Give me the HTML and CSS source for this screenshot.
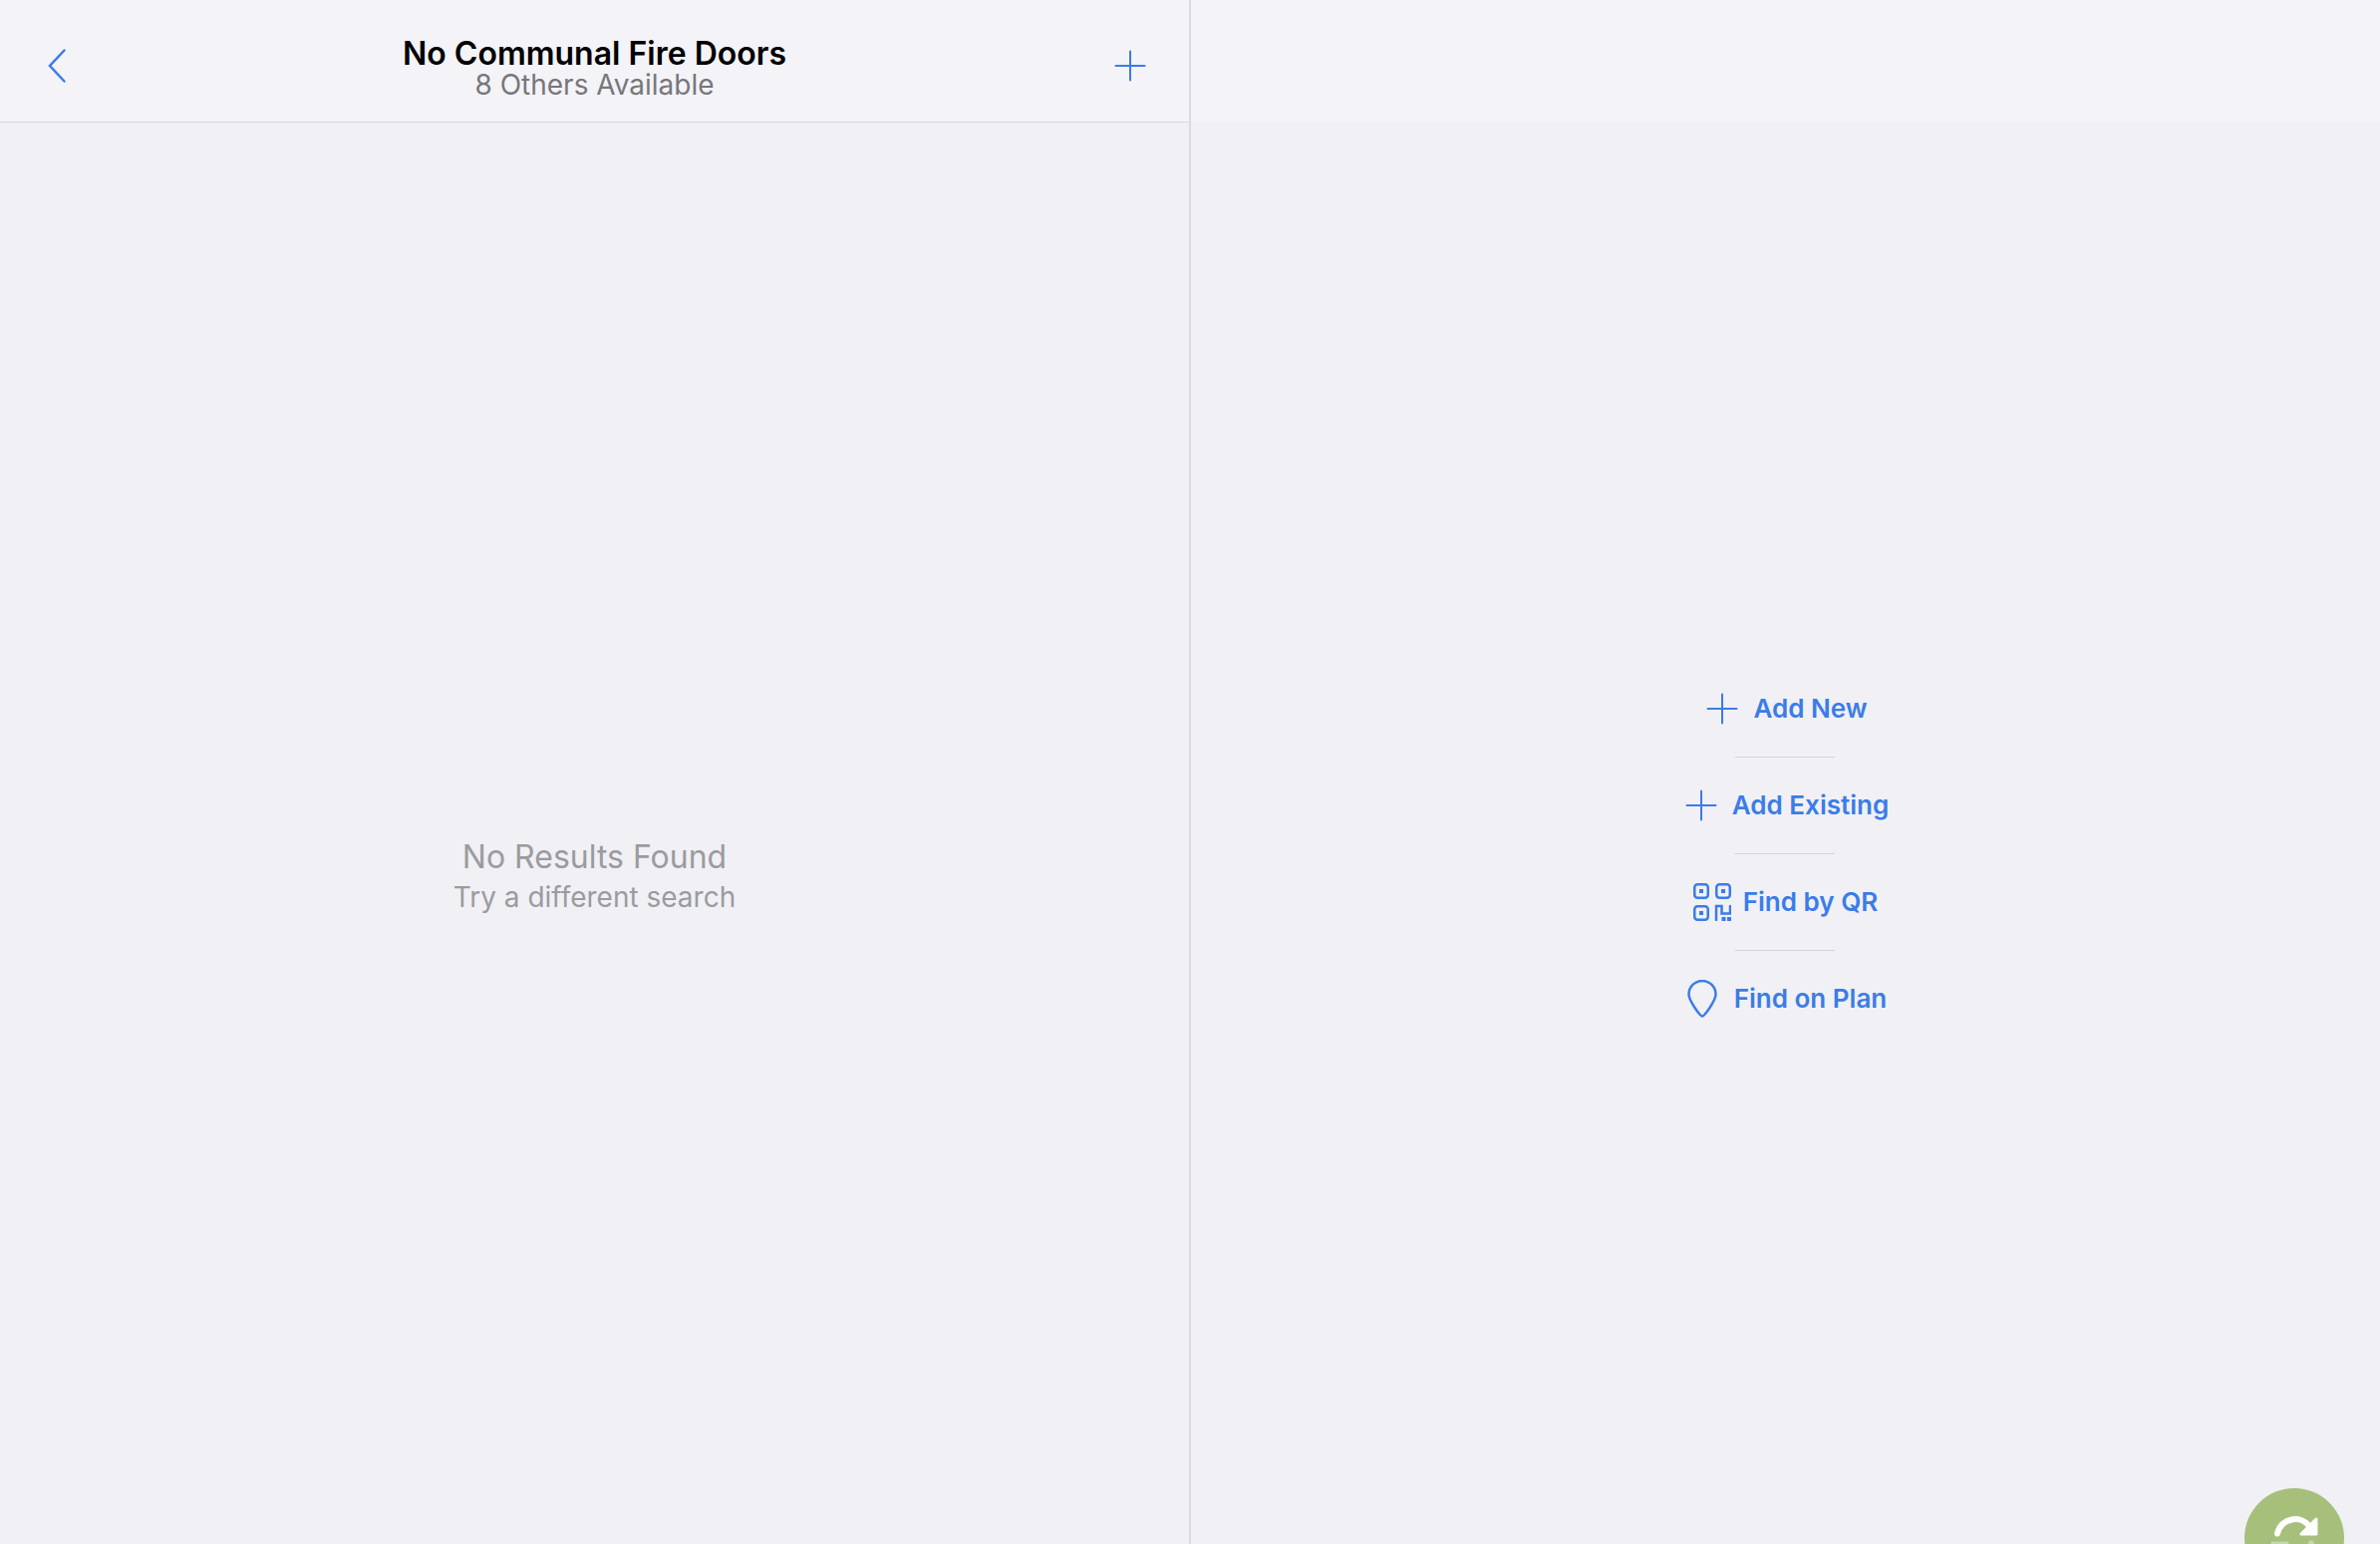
FILE: index.html
```html
<!DOCTYPE html>
<html lang="en">
<head>
<meta charset="utf-8">
<meta name="viewport" content="width=device-width, initial-scale=1">
<title>Communal Fire Doors</title>
<link rel="stylesheet" href="styles.css">
</head>
<body>
<div class="split">
  <section class="pane">
    <header class="bar">
      <button class="icon-button" type="button" aria-label="Back">
        <svg class="icon" viewBox="0 0 38 38" aria-hidden="true"><path class="medium" d="M24.500 3.500L10 19L24.500 34.500"/></svg>
      </button>
      <div class="heading">
        <h1 class="title">No Communal Fire Doors</h1>
        <p class="subtitle">8 Others Available</p>
      </div>
      <button class="icon-button" type="button" aria-label="Add">
        <svg class="icon" viewBox="0 0 38 38" aria-hidden="true"><path d="M19 4.500V33.500M4.500 19H33.500"/></svg>
      </button>
    </header>
    <main class="empty">
      <h2 class="empty-title">No Results Found</h2>
      <p class="empty-text">Try a different search</p>
    </main>
  </section>
  <div class="divider"></div>
  <section class="pane">
    <div class="bar bar-plain"></div>
    <ul class="actions">
      <li class="action">
        <button class="action-button" type="button">
          <svg class="icon" viewBox="0 0 38 38" aria-hidden="true"><path d="M19 4.500V33.500M4.500 19H33.500"/></svg>
          Add New
        </button>
      </li>
      <li class="action">
        <button class="action-button" type="button">
          <svg class="icon" viewBox="0 0 38 38" aria-hidden="true"><path d="M19 4.500V33.500M4.500 19H33.500"/></svg>
          Add Existing
        </button>
      </li>
      <li class="action">
        <button class="action-button" type="button">
          <svg class="icon" viewBox="0 0 38 38" aria-hidden="true">
            <g class="medium">
              <rect x="1.250" y="1.250" width="13.500" height="13.500" rx="3"/>
              <rect x="23.250" y="1.250" width="13.500" height="13.500" rx="3"/>
              <rect x="1.250" y="23.250" width="13.500" height="13.500" rx="3"/>
              <path d="M23 37V23H28.500V30.500H37V23"/>
            </g>
            <path class="solid" d="M6 6h4v4H6zM28 6h4v4h-4zM6 28h4v4H6zM28.500 34h4v4h-4zM34 34h4v4h-4z"/>
          </svg>
          Find by QR
        </button>
      </li>
      <li class="action">
        <button class="action-button" type="button">
          <svg class="icon" viewBox="0 0 38 38" aria-hidden="true"><path class="medium" d="M18 36.500C16 36.500 4.500 21 4.500 14.500A13.500 13.500 0 0 1 31.500 14.500C31.500 21 20 36.500 18 36.500Z"/></svg>
          Find on Plan
        </button>
      </li>
    </ul>
  </section>
</div>
<button class="sync" type="button" aria-label="Sync">
  <svg class="sync-icon" viewBox="0 0 100 100" aria-hidden="true">
    <path class="sync-arc" d="M33 45.500C37 29 57 27 65 38"/>
    <path class="sync-head" d="M72 31V46H57Z"/>
    <g class="sync-lower" transform="rotate(180 50 50.500)">
      <path class="sync-arc" d="M33 45.500C37 29 57 27 65 38"/>
      <path class="sync-head" d="M72 31V46H57Z"/>
    </g>
  </svg>
</button>
</body>
</html>
```
FILE: styles.css
```css
* {
  box-sizing: border-box;
}

body {
  margin: 0;
  background: #f0f0f5;
  font-family: Inter, "Liberation Sans", sans-serif;
}

h1, h2, p, ul {
  margin: 0;
  padding: 0;
}

button {
  padding: 0;
  border: 0;
  background: none;
  color: inherit;
  font: inherit;
  cursor: pointer;
}

.split {
  display: grid;
  grid-template-columns: 1fr 2px 1fr;
  min-height: 100vh;
}

.divider {
  background: #dcdce0;
}

.pane {
  display: flex;
  flex-direction: column;
}

.bar {
  display: flex;
  align-items: center;
  min-height: 123px;
  padding: 10px 40px 0;
  border-bottom: 1px solid #d8d8dc;
  background: #f3f3f8;
}

.bar-plain {
  border-bottom-color: #f0f0f5;
}

.icon-button {
  display: flex;
  color: #3b7ce8;
}

.icon {
  width: 38px;
  height: 38px;
  fill: none;
  stroke: currentColor;
  stroke-width: 2;
  stroke-linecap: round;
}

.medium {
  stroke-width: 2.5;
}

.solid {
  fill: currentColor;
  stroke: none;
}

.heading {
  flex: 1;
  padding-top: 6px;
  text-align: center;
}

.title {
  color: #000;
  font-size: 32px;
  font-weight: 600;
  line-height: 32px;
}

.subtitle {
  color: #77777a;
  font-size: 28px;
  line-height: 30px;
}

.empty {
  display: flex;
  flex: 1;
  flex-direction: column;
  align-items: center;
  justify-content: center;
  padding-top: 88px;
  color: #9b9b9f;
}

.empty-title {
  font-size: 32px;
  font-weight: 400;
  line-height: 40px;
}

.empty-text {
  font-size: 28px;
  line-height: 40px;
}

.actions {
  display: flex;
  flex: 1;
  flex-direction: column;
  align-items: center;
  justify-content: center;
  padding-top: 40px;
  list-style: none;
}

.action {
  display: flex;
  flex-direction: column;
  align-items: center;
}

.action + .action::before {
  width: 100px;
  height: 1px;
  background: #d5d5d9;
  content: "";
}

.action-button {
  display: flex;
  align-items: center;
  gap: 12px;
  height: 96px;
  color: #3b7ce8;
  font-size: 26px;
  font-weight: 600;
}

.sync {
  position: fixed;
  right: 36px;
  bottom: -44px;
  width: 100px;
  height: 100px;
  border-radius: 50%;
  background: #a6c07c;
}

.sync-icon {
  display: block;
}

.sync-arc {
  fill: none;
  stroke: #fff;
  stroke-width: 6;
  stroke-linecap: round;
}

.sync-head {
  fill: #fff;
  stroke: #fff;
  stroke-width: 3;
  stroke-linejoin: round;
}

.sync-lower {
  opacity: 0.35;
}
```
